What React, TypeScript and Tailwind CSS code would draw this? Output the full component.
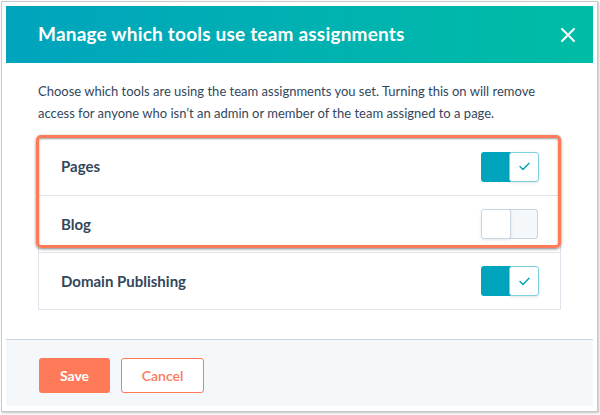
import { useState } from 'react';

type Tool = { name: string; enabled: boolean };

function Toggle({ on, onChange }: { on: boolean; onChange: () => void }) {
  if (on) {
    return (
      <button onClick={onChange} className="flex h-[30px] w-[58px] rounded-[3px]">
        <span className="h-full w-[30px] rounded-l-[3px] bg-[#00a4bd]" />
        <span className="-ml-[2px] flex h-full w-[30px] items-center justify-center rounded-[3px] border border-[#7fd1de] bg-white shadow-[0_1px_3px_rgba(45,62,80,0.15)]">
          <svg width="11" height="9" viewBox="0 0 11 9" fill="none">
            <path d="M1 4.6 L4 7.5 L10 1.2" stroke="#00a4bd" strokeWidth="1.4" strokeLinecap="round" strokeLinejoin="round" />
          </svg>
        </span>
      </button>
    );
  }
  return (
    <button onClick={onChange} className="flex h-[30px] w-[58px] rounded-[3px]">
      <span className="z-10 h-full w-[30px] rounded-[3px] border border-[#cbd6e2] bg-white shadow-[0_1px_3px_rgba(45,62,80,0.12)]" />
      <span className="-ml-[2px] h-full w-[29px] rounded-r-[3px] border border-l-0 border-[#cbd6e2] bg-[#f5f8fa]" />
    </button>
  );
}

export default function App() {
  const [tools, setTools] = useState<Tool[]>([
    { name: 'Pages', enabled: true },
    { name: 'Blog', enabled: false },
    { name: 'Domain Publishing', enabled: true },
  ]);

  const flip = (i: number) =>
    setTools(tools.map((t, j) => (j === i ? { ...t, enabled: !t.enabled } : t)));

  return (
    <div className="h-[415px] w-[600px] bg-white pl-px pt-px" style={{ fontFamily: 'Lato, "Open Sans", sans-serif' }}>
      <div className="h-[411px] w-[597px] border border-[#c9c9c9] bg-white p-[4px] shadow-[1px_1px_2px_rgba(0,0,0,0.25)]">
        {/* header */}
        <div className="flex h-[57px] items-center justify-between bg-gradient-to-r from-[#00a4bd] to-[#00bda5] pl-8 pr-[17px]">
          <h1 className="text-[19px] font-bold tracking-[0.2px] text-white">Manage which tools use team assignments</h1>
          <svg width="16" height="16" viewBox="0 0 16 16" fill="none">
            <path d="M2 2 L14 14 M14 2 L2 14" stroke="white" strokeWidth="2" strokeLinecap="round" />
          </svg>
        </div>

        {/* body */}
        <div className="px-8 pb-[29px] pt-[17px]">
          <p className="text-[13px] leading-[22px] text-[#33475b]">
            Choose which tools are using the team assignments you set. Turning this on will remove access for anyone who isn’t an admin or member of the team assigned to a page.
          </p>

          <div className="relative mt-[13px] border border-[#dfe3eb]">
            {tools.map((t, i) => (
              <div
                key={t.name}
                className={`flex h-[57px] items-center justify-between pl-[22px] pr-[21px] ${i > 0 ? 'border-t border-[#dfe3eb]' : ''}`}
              >
                <span className="text-[15px] font-bold text-[#33475b]">{t.name}</span>
                <Toggle on={t.enabled} onChange={() => flip(i)} />
              </div>
            ))}
            {/* annotation highlight */}
            <div className="pointer-events-none absolute -left-[3px] -right-[1px] -top-[3px] h-[113px] rounded-[5px] border-[3px] border-[#ff7a59] shadow-[0_1px_3px_rgba(0,0,0,0.5),inset_0_1px_2px_rgba(0,0,0,0.4)]" />
          </div>
        </div>

        {/* footer */}
        <div className="flex h-[67px] gap-[11px] border-t border-[#cbd6e2] bg-[#f5f8fa] px-[33px] pt-[18px]">
          <button className="h-[35px] w-[71px] rounded-[3px] bg-[#ff7a59] text-[14px] font-bold text-white">Save</button>
          <button className="h-[35px] w-[83px] rounded-[3px] border border-[#ff7a59] bg-white text-[14px] font-semibold text-[#ff7a59]">Cancel</button>
        </div>
      </div>
    </div>
  );
}
